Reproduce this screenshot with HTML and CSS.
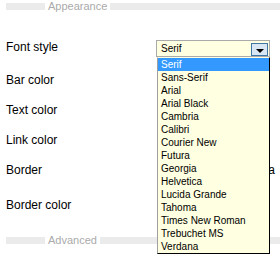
FILE: index.html
```html
<!DOCTYPE html>
<html lang="en">
<head>
  <meta charset="UTF-8" />
  <title>Appearance</title>
  <link rel="stylesheet" href="styles.css">
</head>
<body>
  <div class="section-head">
    <span class="bar bar-left"></span>
    <span class="section-title">Appearance</span>
    <span class="bar bar-right"></span>
  </div>

  <div class="row row-first">
    <label class="row-label">Font style</label>
    <div class="select">
      <div class="select-value">Serif</div>
      <div class="select-button"><span class="arrow"></span></div>
      <ul class="select-list">
        <li class="selected">Serif</li>
        <li>Sans-Serif</li>
        <li>Arial</li>
        <li>Arial Black</li>
        <li>Cambria</li>
        <li>Calibri</li>
        <li>Courier New</li>
        <li>Futura</li>
        <li>Georgia</li>
        <li>Helvetica</li>
        <li>Lucida Grande</li>
        <li>Tahoma</li>
        <li>Times New Roman</li>
        <li>Trebuchet MS</li>
        <li>Verdana</li>
      </ul>
    </div>
  </div>

  <div class="row">
    <label class="row-label">Bar color</label>
  </div>
  <div class="row">
    <label class="row-label">Text color</label>
  </div>
  <div class="row">
    <label class="row-label">Link color</label>
  </div>
  <div class="row row-tall">
    <label class="row-label">Border</label>
    <div class="row-extra">Rounded area</div>
  </div>
  <div class="row">
    <label class="row-label">Border color</label>
  </div>

  <div class="section-head section-advanced">
    <span class="bar bar-left"></span>
    <span class="section-title">Advanced</span>
    <span class="bar bar-right"></span>
  </div>
</body>
</html>
```

FILE: styles.css
```css
html {
  height: 100%;
}

body {
  margin: 0;
  padding: 0 0 0 6px;
  min-height: 100%;
  font-family: "Liberation Sans", Arial, sans-serif;
  font-size: 12px;
  color: #000;
  background-color: #fff;
}

.section-head {
  display: flex;
  align-items: center;
  height: 13px;
}

.bar {
  display: block;
  height: 7px;
  background-color: #ebebeb;
}

.bar-left {
  width: 39px;
}

.bar-right {
  flex: 1;
}

.section-title {
  font-size: 11px;
  line-height: 13px;
  color: #aaa;
  padding: 0 3px;
}

.section-advanced {
  margin-top: 14px;
}

.row {
  display: flex;
  align-items: center;
  height: 30px;
}

.row-first {
  align-items: flex-start;
  height: 17px;
  margin-top: 27px;
  margin-bottom: 8px;
}

.row-tall {
  height: 35px;
  align-items: flex-start;
  padding-top: 8px;
  box-sizing: border-box;
}

.row-label {
  display: block;
  width: 150px;
  flex: none;
  line-height: 14px;
}

.row-extra {
  width: 119px;
  text-align: right;
  line-height: 14px;
}

.select {
  position: relative;
  width: 114px;
  height: 17px;
  box-sizing: border-box;
  border: 1px solid #aaa;
  background-color: #ffffe1;
  font-size: 10px;
}

.select-value {
  line-height: 15px;
  padding-left: 4px;
}

.select-button {
  position: absolute;
  top: 2px;
  right: 1px;
  width: 17px;
  height: 13px;
  box-sizing: border-box;
  border: 1px solid #3f76a4;
  background-color: #d9e7f5;
  display: flex;
  align-items: center;
  justify-content: center;
}

.arrow {
  display: block;
  width: 0;
  height: 0;
  margin-top: 2px;
  border-left: 4px solid transparent;
  border-right: 4px solid transparent;
  border-top: 4px solid #000;
}

.select-list {
  position: absolute;
  z-index: 2;
  top: 16px;
  left: 0;
  width: 113px;
  box-sizing: border-box;
  margin: 0;
  padding: 0;
  list-style: none;
  background-color: #ffffe1;
  border-top: 1px solid #ffffe1;
  border-left: 1px solid #a0a0a0;
  border-right: 1px solid #000;
  border-bottom: 1px solid #000;
}

.select-list li {
  line-height: 13px;
  padding-left: 3px;
  white-space: nowrap;
}

.select-list li.selected {
  background-color: #3399ff;
  color: #fff;
}
```
